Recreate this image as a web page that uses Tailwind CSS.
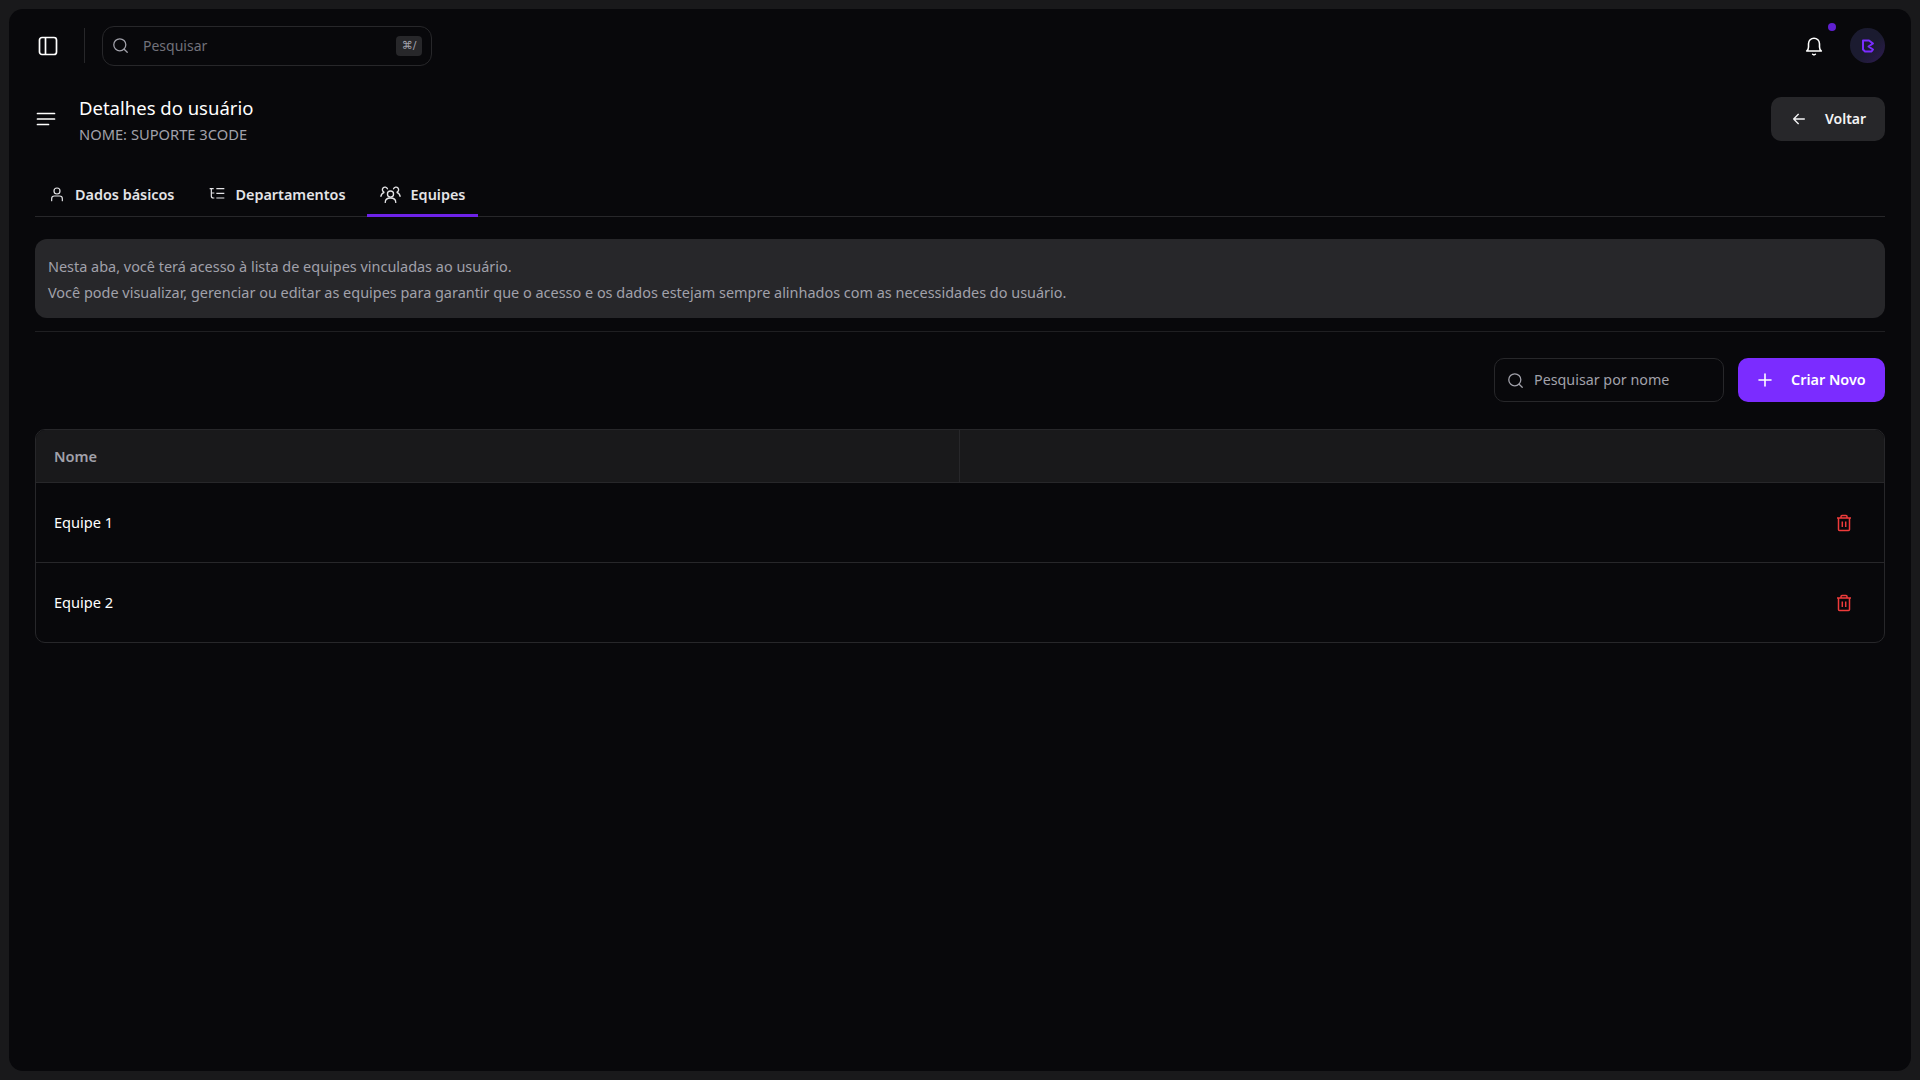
<!DOCTYPE html>
<html lang="pt-BR">

<head>
    <meta charset="UTF-8">
    <meta name="viewport" content="width=device-width, initial-scale=1.0">
    <title>Detalhes do usuário</title>
    <script src="https://cdn.jsdelivr.net/npm/@tailwindcss/browser@4"></script>
</head>

<body class="bg-[#19191b] h-screen overflow-hidden p-[9px] font-['Noto_Sans',sans-serif] text-sm text-white">
    <div class="h-full rounded-[14px] bg-[#08080b] px-[26px]">

        <!-- top bar -->
        <header class="flex items-center h-[73px]">
            <button class="ml-[3px] text-white">
                <svg class="size-[20px]" viewBox="0 0 20 20" fill="none" stroke="currentColor" stroke-width="1.7">
                    <rect x="1.5" y="1.5" width="17" height="17" rx="2.5" />
                    <path d="M7.5 1.5v17" />
                </svg>
            </button>
            <div class="ml-[26px] w-px h-[35px] bg-[#27272a]"></div>
            <div class="ml-[17px] flex items-center w-[330px] h-[40px] rounded-[12px] border border-[#27272a] pl-[9px] pr-[9px]">
                <svg class="size-[17px] text-[#a1a1aa]" viewBox="0 0 24 24" fill="none" stroke="currentColor" stroke-width="1.8" stroke-linecap="round">
                    <circle cx="11" cy="11" r="8.5" />
                    <path d="m21.5 21.5-4.3-4.3" />
                </svg>
                <span class="ml-[14px] pt-[1px] text-[#71717a]">Pesquisar</span>
                <kbd class="ml-auto flex items-center justify-center w-[26px] h-[20px] rounded-[4px] bg-[#27272a] text-[11px] text-[#a1a1aa] font-['DejaVu_Sans',sans-serif]">⌘/</kbd>
            </div>
            <div class="ml-auto flex items-center">
                <div class="relative mr-[25px]">
                    <svg class="size-[22px] text-white" viewBox="0 0 24 24" fill="none" stroke="currentColor" stroke-width="1.7" stroke-linecap="round" stroke-linejoin="round">
                        <path d="M4 17.500c1.400-1.300 2-2.500 2-4.500V9.500a6 6 0 0 1 12 0V13c0 2 .6 3.200 2 4.500z" />
                        <path d="M10.500 21c.8.700 2.200.700 3 0" />
                    </svg>
                    <span class="absolute -top-[12px] -right-[11px] size-[8px] rounded-full bg-[#6020d0]"></span>
                </div>
                <div class="flex items-center justify-center size-[35px] rounded-full bg-[linear-gradient(135deg,#1b1b30_55%,#2e1a52)]">
                    <svg class="size-[16px]" viewBox="0 0 16 16" fill="none" stroke="#7b2cff" stroke-width="2" stroke-linejoin="round">
                        <path d="M3 2.500h6l4 3-4.500 3 4.500 3-1.500 2H5l-2-2z" />
                    </svg>
                </div>
            </div>
        </header>

        <!-- title -->
        <section class="flex items-center justify-between h-[58px] mt-[8px]">
            <div class="flex items-center">
                <svg class="ml-[1px] size-[20px] text-white" viewBox="0 0 20 20" fill="none" stroke="currentColor" stroke-width="1.7" stroke-linecap="round">
                    <path d="M1.500 4.500h17M1.500 10h17M1.500 15.500h11" />
                </svg>
                <div class="ml-[23px] pt-[3px]">
                    <h1 class="text-[18.5px] leading-[26px] text-white">Detalhes do usuário</h1>
                    <p class="text-[14.7px] leading-[26px] text-[#a1a1aa]">NOME: SUPORTE 3CODE</p>
                </div>
            </div>
            <button class="flex items-center h-[44px] w-[114px] rounded-[10px] bg-[#27272a] pl-[20px] font-semibold text-[#f4f4f5]">
                <svg class="size-[16px] shrink-0" viewBox="0 0 24 24" fill="none" stroke="currentColor" stroke-width="2" stroke-linecap="round" stroke-linejoin="round">
                    <path d="M20 12H4M11 5l-7 7 7 7" />
                </svg>
                <span class="ml-[18px]">Voltar</span>
            </button>
        </section>

        <!-- tabs -->
        <nav class="flex items-stretch h-[42px] mt-[27px] border-b border-[#27272a] text-[14.4px] font-semibold text-[#e4e4e7]">
            <a class="flex items-center pl-[14px] pr-[35px] pb-[1px] gap-[10px]">
                <svg class="size-[16px] -mt-[2px]" viewBox="0 0 24 24" fill="none" stroke="currentColor" stroke-width="1.8" stroke-linecap="round">
                    <circle cx="12" cy="7.500" r="4.500" />
                    <path d="M4 22v-3a4 4 0 0 1 4-4h8a4 4 0 0 1 4 4v3" />
                </svg>
                Dados básicos
            </a>
            <a class="flex items-center pr-[21px] pb-[1px] gap-[10px]">
                <svg class="size-[16px] -mt-[2px]" viewBox="0 0 24 24" fill="none" stroke="currentColor" stroke-width="1.8">
                    <path d="M1 4h6M3.500 4v11a3 3 0 0 0 3 3H8M3.500 10.500H8M11 4h12M11 11h12M11 18h12" />
                </svg>
                Departamentos
            </a>
            <a class="flex items-center px-[13px] pb-[1px] gap-[10px] -mb-px border-b-[3px] border-[#6d22e8] pt-[2px]">
                <svg class="size-[21px] -mt-[2px]" viewBox="0 0 24 24" fill="none" stroke="currentColor" stroke-width="1.500" stroke-linecap="round">
                    <circle cx="12" cy="11.500" r="3.500" />
                    <path d="M6 21c0-3 2.500-5 6-5s6 2 6 5" />
                    <path d="M8.500 5.500A3 3 0 1 0 5 9.500c-2 .5-3.500 2-4 4.500" />
                    <path d="M15.500 5.500A3 3 0 1 1 19 9.500c2 .5 3.500 2 4 4.500" />
                </svg>
                Equipes
            </a>
        </nav>

        <!-- info -->
        <div class="mt-[22px] h-[79px] rounded-[12px] bg-[#27272a] px-[13px] pt-[15px] text-[14.45px] leading-[26px] text-[#a1a1aa]">
            <p>Nesta aba, você terá acesso à lista de equipes vinculadas ao usuário.</p>
            <p>Você pode visualizar, gerenciar ou editar as equipes para garantir que o acesso e os dados estejam sempre alinhados com as necessidades do usuário.</p>
        </div>
        <div class="mt-[13px] h-px bg-[#1f1f22]"></div>

        <!-- filters -->
        <div class="flex justify-end gap-[14px] mt-[26px]">
            <div class="flex items-center w-[230px] h-[44px] rounded-[10px] border border-[#27272a] pl-[12px]">
                <svg class="size-[17px] text-[#a1a1aa]" viewBox="0 0 24 24" fill="none" stroke="currentColor" stroke-width="1.8" stroke-linecap="round">
                    <circle cx="11" cy="11" r="8.500" />
                    <path d="m21.500 21.500-4.300-4.300" />
                </svg>
                <span class="ml-[10px] pt-[1px] text-[14.3px] text-[#a1a1aa]">Pesquisar por nome</span>
            </div>
            <button class="flex items-center w-[147px] h-[44px] rounded-[10px] bg-[#7b2cff] pl-[20px] text-[14.4px] font-semibold text-white">
                <svg class="size-[14px] shrink-0" viewBox="0 0 14 14" fill="none" stroke="currentColor" stroke-width="1.600" stroke-linecap="round">
                    <path d="M7 1v12M1 7h12" />
                </svg>
                <span class="ml-[19px] pt-[1px]">Criar Novo</span>
            </button>
        </div>

        <!-- table -->
        <div class="mt-[27px] rounded-[10px] border border-[#27272a] overflow-hidden text-[14.6px]">
            <div class="grid grid-cols-2 h-[53px] bg-[#19191b] border-b border-[#27272a] font-semibold text-[#a1a1aa]">
                <div class="flex items-center pl-[18px] border-r border-[#27272a]">Nome</div>
                <div></div>
            </div>
            <div class="flex items-center justify-between h-[80px] pl-[18px] pr-[31px] border-b border-[#27272a] text-white">
                Equipe 1
                <svg class="size-[18px] text-[#ef3b3b]" viewBox="0 0 18 18" fill="none" stroke="currentColor" stroke-width="1.500" stroke-linejoin="round">
                    <path d="M2 4h14M6 4V2.500A1 1 0 0 1 7 1.500h4a1 1 0 0 1 1 1V4M3.500 4v11.500a1 1 0 0 0 1 1h9a1 1 0 0 0 1-1V4M7.300 7.500v5.500M10.700 7.500v5.500" />
                </svg>
            </div>
            <div class="flex items-center justify-between h-[79px] pl-[18px] pr-[31px] text-white">
                Equipe 2
                <svg class="size-[18px] text-[#ef3b3b]" viewBox="0 0 18 18" fill="none" stroke="currentColor" stroke-width="1.500" stroke-linejoin="round">
                    <path d="M2 4h14M6 4V2.500A1 1 0 0 1 7 1.500h4a1 1 0 0 1 1 1V4M3.500 4v11.500a1 1 0 0 0 1 1h9a1 1 0 0 0 1-1V4M7.300 7.500v5.500M10.700 7.500v5.500" />
                </svg>
            </div>
        </div>
    </div>
</body>

</html>
